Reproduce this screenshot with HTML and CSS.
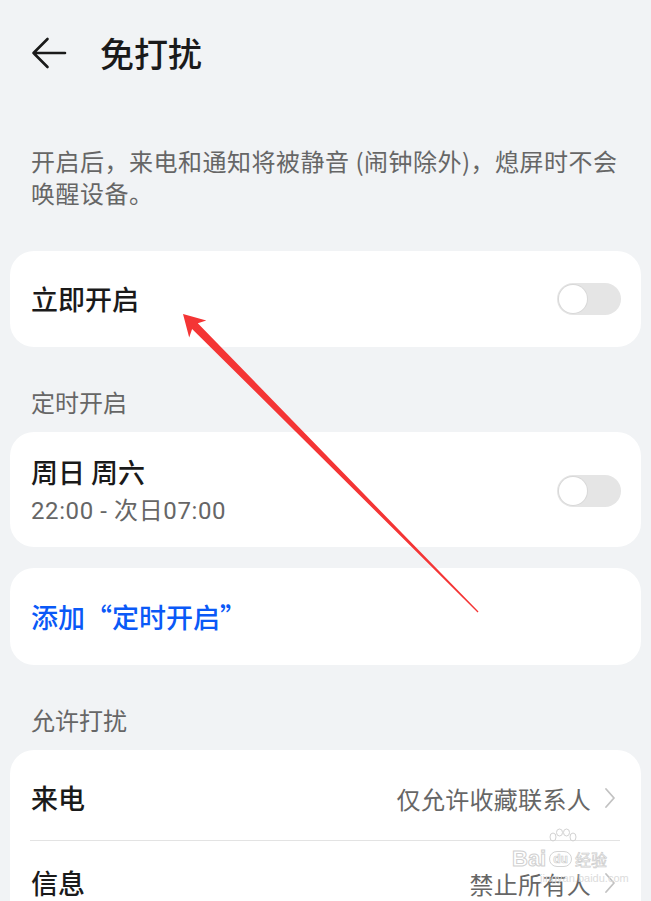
FILE: index.html
```html
<!DOCTYPE html>
<html lang="zh-CN">
<head>
    <meta charset="UTF-8">
    <meta name="viewport" content="width=device-width, initial-scale=1.0">
    <title>免打扰</title>
    <link rel="stylesheet" href="styles.css">
</head>
<body>
    <div class="page">
        <!-- Top bar -->
        <header class="top-bar">
            <svg class="back-icon" width="36" height="32" viewBox="0 0 36 32">
                <path d="M34 16H2.5M16.5 2L2.5 16l14 14" fill="none" stroke="#1a1a1a" stroke-width="2.6" stroke-linecap="round" stroke-linejoin="round"/>
            </svg>
            <h1>免打扰</h1>
        </header>

        <p class="intro">开启后，来电和通知将被静音 (闹钟除外)，熄屏时不会唤醒设备。</p>

        <section class="card">
            <div class="row">
                <span class="row-title">立即开启</span>
                <span class="switch"><span class="knob"></span></span>
            </div>
        </section>

        <h2 class="group-label">定时开启</h2>

        <section class="card">
            <div class="row row-tall">
                <div class="row-text">
                    <span class="row-title">周日 周六</span>
                    <span class="row-sub">22:00 - 次日07:00</span>
                </div>
                <span class="switch"><span class="knob"></span></span>
            </div>
        </section>

        <section class="card card-add">
            <div class="row">
                <a class="add-link" href="#">添加“定时开启”</a>
            </div>
        </section>

        <h2 class="group-label">允许打扰</h2>

        <section class="card card-list">
            <div class="row row-list">
                <span class="row-title">来电</span>
                <span class="row-value">仅允许收藏联系人
                    <svg class="chevron" width="12" height="22" viewBox="0 0 12 22"><path d="M2 2l8 9-8 9" fill="none" stroke="#c2c2c2" stroke-width="1.8" stroke-linecap="round" stroke-linejoin="round"/></svg>
                </span>
            </div>
            <div class="divider"></div>
            <div class="row row-list">
                <span class="row-title">信息</span>
                <span class="row-value">禁止所有人
                    <svg class="chevron" width="12" height="22" viewBox="0 0 12 22"><path d="M2 2l8 9-8 9" fill="none" stroke="#c2c2c2" stroke-width="1.8" stroke-linecap="round" stroke-linejoin="round"/></svg>
                </span>
            </div>
        </section>
    </div>

    <!-- Red annotation arrow drawn over the screenshot -->
    <svg class="annotation" width="651" height="901" viewBox="0 0 651 901">
        <polygon points="183,314 206.3,320.5 197.8,323.3 478.5,611.6 477.6,612.4 192.1,328.9 189.2,337.4" fill="#f43535"/>
    </svg>

    <!-- Faint site watermark -->
    <div class="watermark">
        <svg class="paw" width="30" height="22" viewBox="0 0 30 22">
            <g fill="none" stroke="#d2d2d2" stroke-width="1">
                <ellipse cx="5" cy="9" rx="3" ry="4"/>
                <ellipse cx="11.5" cy="4.5" rx="3" ry="3.5"/>
                <ellipse cx="18.5" cy="4.5" rx="3" ry="3.5"/>
                <ellipse cx="25" cy="9" rx="3" ry="4"/>
            </g>
        </svg>
        <div class="wm-line">
            <span class="wm-bai">Bai</span>
            <span class="wm-du">du</span>
            <span class="wm-jy">经验</span>
        </div>
        <div class="wm-url">jingyan.baidu.com</div>
    </div>
</body>
</html>
```

FILE: styles.css
```css
/* Global */
body {
    margin: 0;
    padding: 0;
    background-color: #f1f3f5;
    color: #1a1a1a;
    font-family: "Noto Sans CJK SC", "Noto Sans", sans-serif;
    position: relative;
    overflow: hidden;
    height: 901px;
}

.page {
    padding-bottom: 40px;
}

/* Top bar */
.top-bar {
    height: 106px;
    display: flex;
    align-items: center;
    padding-left: 31px;
}

.back-icon {
    display: block;
    margin-right: 33px;
}

.top-bar h1 {
    margin: 0;
    font-size: 34px;
    font-weight: 500;
    line-height: 40px;
    color: #1a1a1a;
}

.intro {
    margin: 0 0 42px;
    padding: 39px 21px 0 31px;
    font-size: 24px;
    line-height: 32px;
    letter-spacing: 0.5px;
    color: #666;
}

/* Cards */
.card {
    margin: 0 10px;
    background-color: #fff;
    border-radius: 24px;
}

.row {
    height: 96px;
    display: flex;
    align-items: center;
    justify-content: space-between;
    padding: 0 20px 0 21px;
}

.row-title {
    font-size: 27px;
    font-weight: 500;
    line-height: 30px;
    color: #1a1a1a;
}

.row-tall {
    height: auto;
    padding-top: 25px;
    padding-bottom: 22px;
}

.row-text {
    display: flex;
    flex-direction: column;
    gap: 10px;
}

.row-sub {
    font-family: Roboto, "Noto Sans CJK SC", sans-serif;
    font-size: 24px;
    line-height: 28px;
    letter-spacing: 0.6px;
    color: #666;
}

/* Switch (off state) */
.switch {
    width: 64px;
    height: 32px;
    border-radius: 16px;
    background-color: #e5e5e5;
    display: flex;
    align-items: center;
    padding-left: 2px;
    box-sizing: border-box;
}

.knob {
    width: 28px;
    height: 28px;
    border-radius: 50%;
    background-color: #fff;
    box-shadow: 0 0 0 1px #d8d8d8;
}

.card-add {
    margin-top: 21px;
}

.card-add .row {
    height: 97px;
}

.add-link {
    font-size: 27px;
    font-weight: 500;
    color: #0a59f7;
    text-decoration: none;
}

/* Section labels */
.group-label {
    margin: 0;
    padding: 41px 31px 16px;
    font-size: 24px;
    font-weight: 400;
    line-height: 28px;
    color: #666;
}

.card-list {
    padding-top: 6px;
    padding-bottom: 20px;
}

.row-list {
    height: 84px;
    padding-right: 25px;
}

.row-value {
    display: flex;
    align-items: center;
    gap: 13px;
    font-size: 24px;
    letter-spacing: 0.3px;
    color: #666;
}

.chevron {
    display: block;
}

.divider {
    height: 1px;
    margin: 0 21px 0 20px;
    background-color: #e3e3e3;
}

/* Overlays */
.annotation {
    position: absolute;
    top: 0;
    left: 0;
    pointer-events: none;
}

.watermark {
    position: absolute;
    left: 512px;
    top: 828px;
    width: 110px;
    pointer-events: none;
    white-space: nowrap;
}

.paw {
    display: block;
    margin-left: 36px;
}

.wm-line {
    display: flex;
    align-items: center;
    gap: 3px;
    height: 18px;
}

.wm-bai {
    font-family: "Liberation Sans", sans-serif;
    font-size: 22px;
    font-weight: 700;
    line-height: 18px;
    color: rgba(255, 255, 255, 0.5);
    -webkit-text-stroke: 1px #d0d0d0;
}

.wm-du {
    font-family: "Liberation Sans", sans-serif;
    font-size: 12px;
    font-weight: 700;
    line-height: 14px;
    color: rgba(255, 255, 255, 0.5);
    -webkit-text-stroke: 0.7px #cdcdcd;
    border: 1px solid #d4d4d4;
    border-radius: 8px;
    padding: 0 3px;
}

.wm-jy {
    font-size: 16px;
    line-height: 18px;
    color: rgba(255, 255, 255, 0.5);
    -webkit-text-stroke: 0.7px #cdcdcd;
}

.wm-url {
    margin-top: 3px;
    padding-left: 28px;
    font-family: "Liberation Sans", sans-serif;
    font-size: 11px;
    line-height: 14px;
    color: #dcdcdc;
}
```
